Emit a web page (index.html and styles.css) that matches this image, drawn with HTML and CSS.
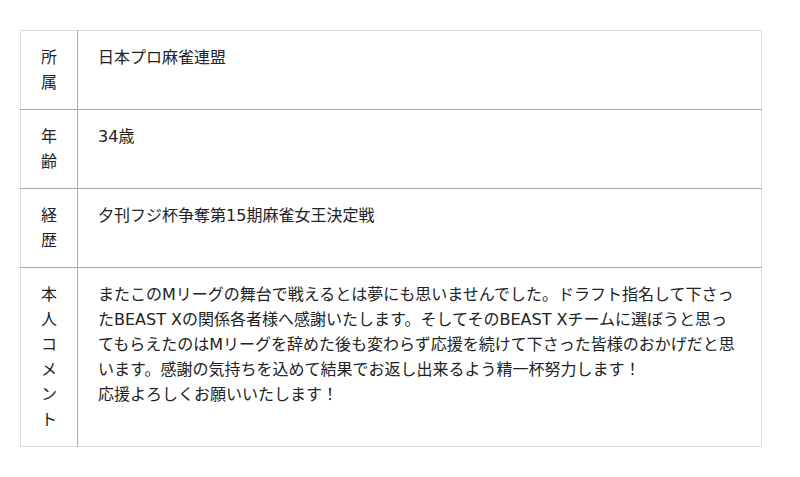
FILE: index.html
```html
<!DOCTYPE html>
<html lang="ja">
<head>
<meta charset="utf-8">
<link rel="stylesheet" href="styles.css">
</head>
<body>
<table class="profile">
  <tr>
    <th class="label">所属</th>
    <td class="value">日本プロ麻雀連盟</td>
  </tr>
  <tr>
    <th class="label">年齢</th>
    <td class="value">34歳</td>
  </tr>
  <tr>
    <th class="label">経歴</th>
    <td class="value">夕刊フジ杯争奪第15期麻雀女王決定戦</td>
  </tr>
  <tr>
    <th class="label">本人コメント</th>
    <td class="value">またこのMリーグの舞台で戦えるとは夢にも思いませんでした。ドラフト指名して下さったBEAST Xの関係各者様へ感謝いたします。そしてそのBEAST Xチームに選ぼうと思ってもらえたのはMリーグを辞めた後も変わらず応援を続けて下さった皆様のおかげだと思います。感謝の気持ちを込めて結果でお返し出来るよう精一杯努力します！<br>応援よろしくお願いいたします！</td>
  </tr>
</table>
</body>
</html>
```
FILE: styles.css
```css
html, body {
  margin: 0;
  padding: 0;
  background: #fff;
}
body {
  padding: 30px 38px 0 20px;
  font-family: "DejaVu Sans", "Noto Sans CJK JP", sans-serif;
  font-size: 16px;
  line-height: 25px;
  color: #222;
}
.profile {
  width: 742px;
  border-collapse: collapse;
  border: 1px solid #ddd;
}
.profile tr + tr th,
.profile tr + tr td {
  border-top: 1px solid #aaa;
}
.label {
  width: 16px;
  padding: 14px 20px;
  border-right: 1px solid #aaa;
  font-weight: normal;
  text-align: center;
  vertical-align: top;
  word-break: break-all;
}
.value {
  padding: 14px 20px;
  vertical-align: top;
  text-align: left;
}
```
